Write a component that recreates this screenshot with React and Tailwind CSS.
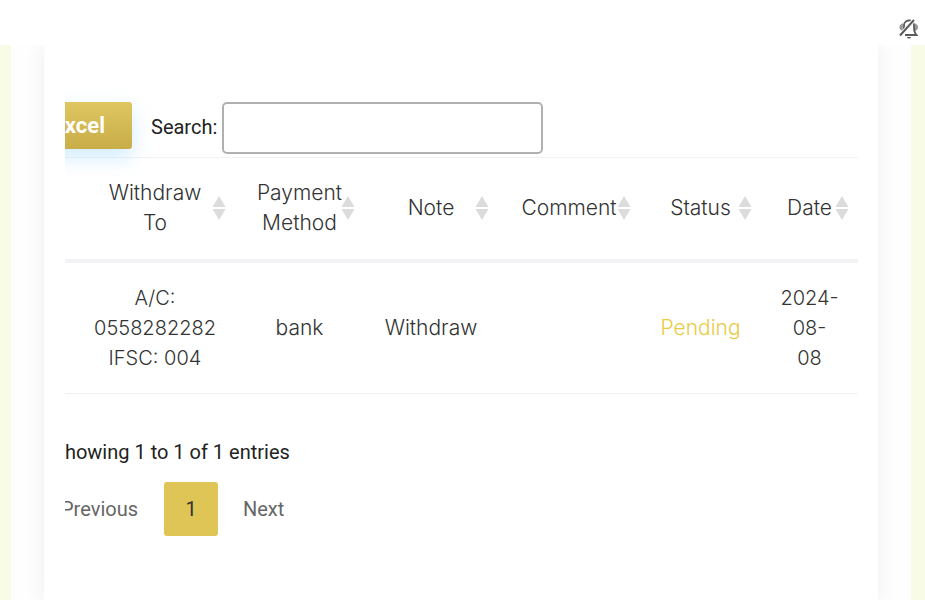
const columns = [
  { label: '', width: 'w-[22px]' },
  { label: 'Withdraw\nTo', width: 'w-[160px]' },
  { label: 'Payment\nMethod', width: 'w-[129px]' },
  { label: 'Note', width: 'w-[134px]' },
  { label: 'Comment', width: 'w-[142px]' },
  { label: 'Status', width: 'w-[121px]' },
  { label: 'Date', width: 'w-[97px]' },
];

const BellOffIcon = () => (
  <svg viewBox="0 0 24 24" className="w-6 h-6" fill="none" stroke="#5a5a5a" strokeWidth="1.8">
    <path d="M5 7.500a3 3 0 0 0 0 5.500zM18.500 7.500a3 3 0 0 1 0 5.500z" fill="#999" stroke="#999" />
    <path d="M7 12V9a5 5 0 0 1 10-1c0 5 0 7 2.500 10H8" />
    <path d="M10 20h4a2 1.500 0 0 1-4 0z" fill="#5a5a5a" stroke="none" />
    <path d="M4 17.500L16.500 3.500" stroke="#fff" strokeWidth="4" />
    <path d="M3 18.500L17 3" strokeWidth="2" />
  </svg>
);

const SortIcon = () => (
  <svg viewBox="0 0 14 24" className="absolute right-[9px] top-1/2 -translate-y-1/2 w-3.5 h-6" fill="#dcdcdc">
    <path d="M7 0l6.500 11H.5zM7 24L.5 13h13z" />
  </svg>
);

const WithdrawTable = () => (
  <table className="w-full table-fixed border-collapse text-center font-light text-[21px] leading-[30px] text-[#333] font-['Inter',sans-serif]">
    <thead>
      <tr className="h-[103px] border-t border-[#f2f2f2] border-b-4 border-b-[#f3f3f5]">
        {columns.map(({ label, width }) => (
          <th key={label} className={`${width} relative p-0 font-light whitespace-pre-line`}>
            {label}
            <SortIcon />
          </th>
        ))}
      </tr>
    </thead>
    <tbody>
      <tr className="h-[133px] border-b border-[#f1f1f1]">
        <td></td>
        <td className="text-xl leading-[30px]">A/C:<br />0558282282<br />IFSC: 004</td>
        <td>bank</td>
        <td>Withdraw</td>
        <td></td>
        <td className="text-[#e8cb45]">Pending</td>
        <td className="text-xl leading-[30px]">2024-<br />08-<br />08</td>
      </tr>
    </tbody>
  </table>
);

export default function App() {
  return (
    <div className="flex flex-col min-h-screen overflow-hidden bg-white font-['Roboto',sans-serif] text-xl text-[#222]">
      <header className="h-[45px] flex justify-end items-end px-1 pb-1">
        <button type="button" aria-label="Notifications">
          <BellOffIcon />
        </button>
      </header>

      <main className="flex-1 flex bg-[#f8fce6] pl-[11px] pr-3.5 overflow-hidden">
        <div className="flex-1 flex bg-[#fefefe] px-[33px] overflow-hidden">
          <section className="flex-1 min-w-0 bg-white pl-[21px] pr-5 pt-6 shadow-[0_0_20px_rgba(0,0,0,0.07)]">
            <div className="overflow-hidden pt-8">
              <div className="-ml-3">
                <div className="flex items-start h-[56px] pt-px">
                  <button
                    type="button"
                    className="-ml-10 mr-[19px] h-[47px] w-[119px] pr-[27px] pt-px text-right rounded-[3px] bg-linear-to-b from-[#dfc661] to-[#c8ad48] text-white font-bold text-[22px] shadow-[0_8px_20px_rgba(120,200,255,0.35)]"
                  >
                    Excel
                  </button>
                  <label htmlFor="search" className="leading-[50px] mr-[5px]">Search:</label>
                  <input
                    id="search"
                    type="search"
                    className="w-[321px] h-[52px] px-3 bg-white border-2 border-[#b0b0b0] rounded-[5px] outline-none"
                  />
                </div>

                <WithdrawTable />

                <p className="mt-11 leading-7">Showing 1 to 1 of 1 entries</p>

                <nav className="flex items-center mt-4 text-[#666]">
                  <a href="#prev" className="pl-2 pr-[26px]">Previous</a>
                  <a href="#1" className="w-[54px] h-[54px] flex items-center justify-center rounded-[3px] bg-[#dfc556] text-[#333]">1</a>
                  <a href="#next" className="px-[25px]">Next</a>
                </nav>
              </div>
            </div>
          </section>
        </div>
      </main>
    </div>
  );
}
